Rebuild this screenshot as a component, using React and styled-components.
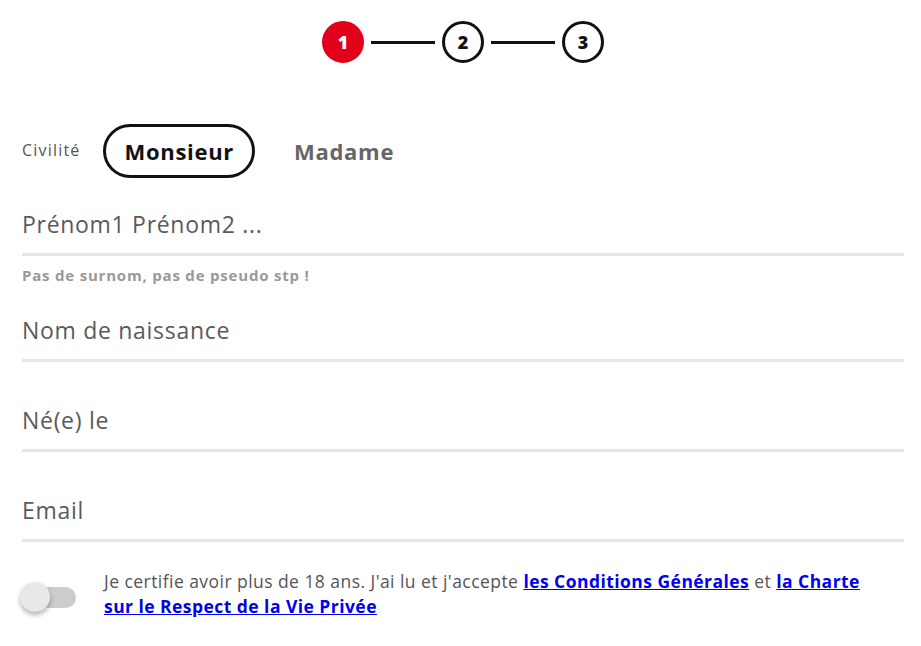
import React, { useState } from 'react';
import styled, { createGlobalStyle } from 'styled-components';

const GlobalStyle = createGlobalStyle`
    body {
        margin: 0;
        background: #ffffff;
        font-family: "Open Sans", "Liberation Sans", sans-serif;
    }
`;

const Page = styled.div`
    width: 921px;
    padding: 21px 17px 0 22px;
    box-sizing: border-box;
`;

const Stepper = styled.div`
    display: flex;
    justify-content: center;
    align-items: center;
    gap: 7px;
`;

const Step = styled.div`
    width: 42px;
    height: 42px;
    box-sizing: border-box;
    border-radius: 50%;
    border: 3px solid ${p => (p.$active ? '#e2001a' : '#111111')};
    background: ${p => (p.$active ? '#e2001a' : '#ffffff')};
    color: ${p => (p.$active ? '#ffffff' : '#111111')};
    display: flex;
    align-items: center;
    justify-content: center;
    font-weight: 800;
    font-size: 18px;
`;

const StepLine = styled.div`
    width: 64px;
    height: 3px;
    background: #111111;
`;

const CiviliteRow = styled.div`
    display: flex;
    align-items: center;
    margin-top: 61px;
`;

const Label = styled.span`
    font-size: 16px;
    letter-spacing: 1.2px;
    color: #555555;
    margin-right: 22px;
    margin-top: -3px;
`;

const Choice = styled.button`
    height: 54px;
    box-sizing: border-box;
    padding: 0 18px 0 19px;
    border-radius: 27px;
    border: 3px solid ${p => (p.$selected ? '#111111' : 'transparent')};
    background: none;
    font-family: inherit;
    font-size: 22px;
    letter-spacing: 0.7px;
    font-weight: 700;
    color: ${p => (p.$selected ? '#111111' : '#666666')};
    margin-right: 17px;
    cursor: pointer;
`;

const Field = styled.div`
    border-bottom: 3px solid #e6e6e6;
    margin-top: ${p => p.$gap}px;
`;

const Input = styled.input`
    display: block;
    width: 100%;
    height: 58px;
    border: none;
    outline: none;
    padding: 0;
    font-family: inherit;
    font-size: 23px;
    letter-spacing: 0.7px;
    color: #333333;
    background: none;

    &::placeholder {
        color: #5a5a5a;
    }
`;

const Hint = styled.div`
    margin-top: 10px;
    font-size: 15px;
    letter-spacing: 0.8px;
    line-height: 18px;
    font-weight: 700;
    color: #999999;
`;

const Consent = styled.div`
    display: flex;
    align-items: flex-start;
    margin-top: 27px;
`;

const Toggle = styled.button`
    position: relative;
    flex: none;
    width: 54px;
    height: 30px;
    margin-top: 13px;
    margin-right: 28px;
    padding: 0;
    border: none;
    background: none;
    cursor: pointer;
`;

const Track = styled.span`
    position: absolute;
    left: 16px;
    top: 5px;
    width: 38px;
    height: 21px;
    border-radius: 11px;
    background: ${p => (p.$on ? '#f08a95' : '#cccccc')};
`;

const Knob = styled.span`
    position: absolute;
    top: 0;
    left: ${p => (p.$on ? '24px' : '-2px')};
    width: 30px;
    height: 30px;
    border-radius: 50%;
    background: ${p => (p.$on ? '#e2001a' : '#e8e8ea')};
    box-shadow: 0 3px 5px rgba(0, 0, 0, 0.3);
`;

const ConsentText = styled.p`
    margin: 0;
    max-width: 770px;
    font-size: 17.5px;
    letter-spacing: 0.45px;
    line-height: 25px;
    color: #555555;
`;

const Link = styled.a`
    color: #0000ee;
    font-weight: 700;
    text-decoration: underline;
`;

const App = () => {
    const [civilite, setCivilite] = useState('M');
    const [agreed, setAgreed] = useState(false);

    return (
        <Page>
            <GlobalStyle />
            <Stepper>
                <Step $active>1</Step>
                <StepLine />
                <Step>2</Step>
                <StepLine />
                <Step>3</Step>
            </Stepper>
            <CiviliteRow>
                <Label>Civilité</Label>
                <Choice $selected={civilite === 'M'} onClick={() => setCivilite('M')}>Monsieur</Choice>
                <Choice $selected={civilite === 'F'} onClick={() => setCivilite('F')}>Madame</Choice>
            </CiviliteRow>
            <Field $gap={17}>
                <Input placeholder="Prénom1 Prénom2 ..." />
            </Field>
            <Hint>Pas de surnom, pas de pseudo stp !</Hint>
            <Field $gap={17}>
                <Input placeholder="Nom de naissance" />
            </Field>
            <Field $gap={29}>
                <Input placeholder="Né(e) le" />
            </Field>
            <Field $gap={29}>
                <Input placeholder="Email" />
            </Field>
            <Consent>
                <Toggle onClick={() => setAgreed(!agreed)}>
                    <Track $on={agreed} />
                    <Knob $on={agreed} />
                </Toggle>
                <ConsentText>
                    Je certifie avoir plus de 18 ans. J'ai lu et j'accepte{' '}
                    <Link href="#">les Conditions Générales</Link> et{' '}
                    <Link href="#">la Charte sur le Respect de la Vie Privée</Link>
                </ConsentText>
            </Consent>
        </Page>
    );
};

export default App;
